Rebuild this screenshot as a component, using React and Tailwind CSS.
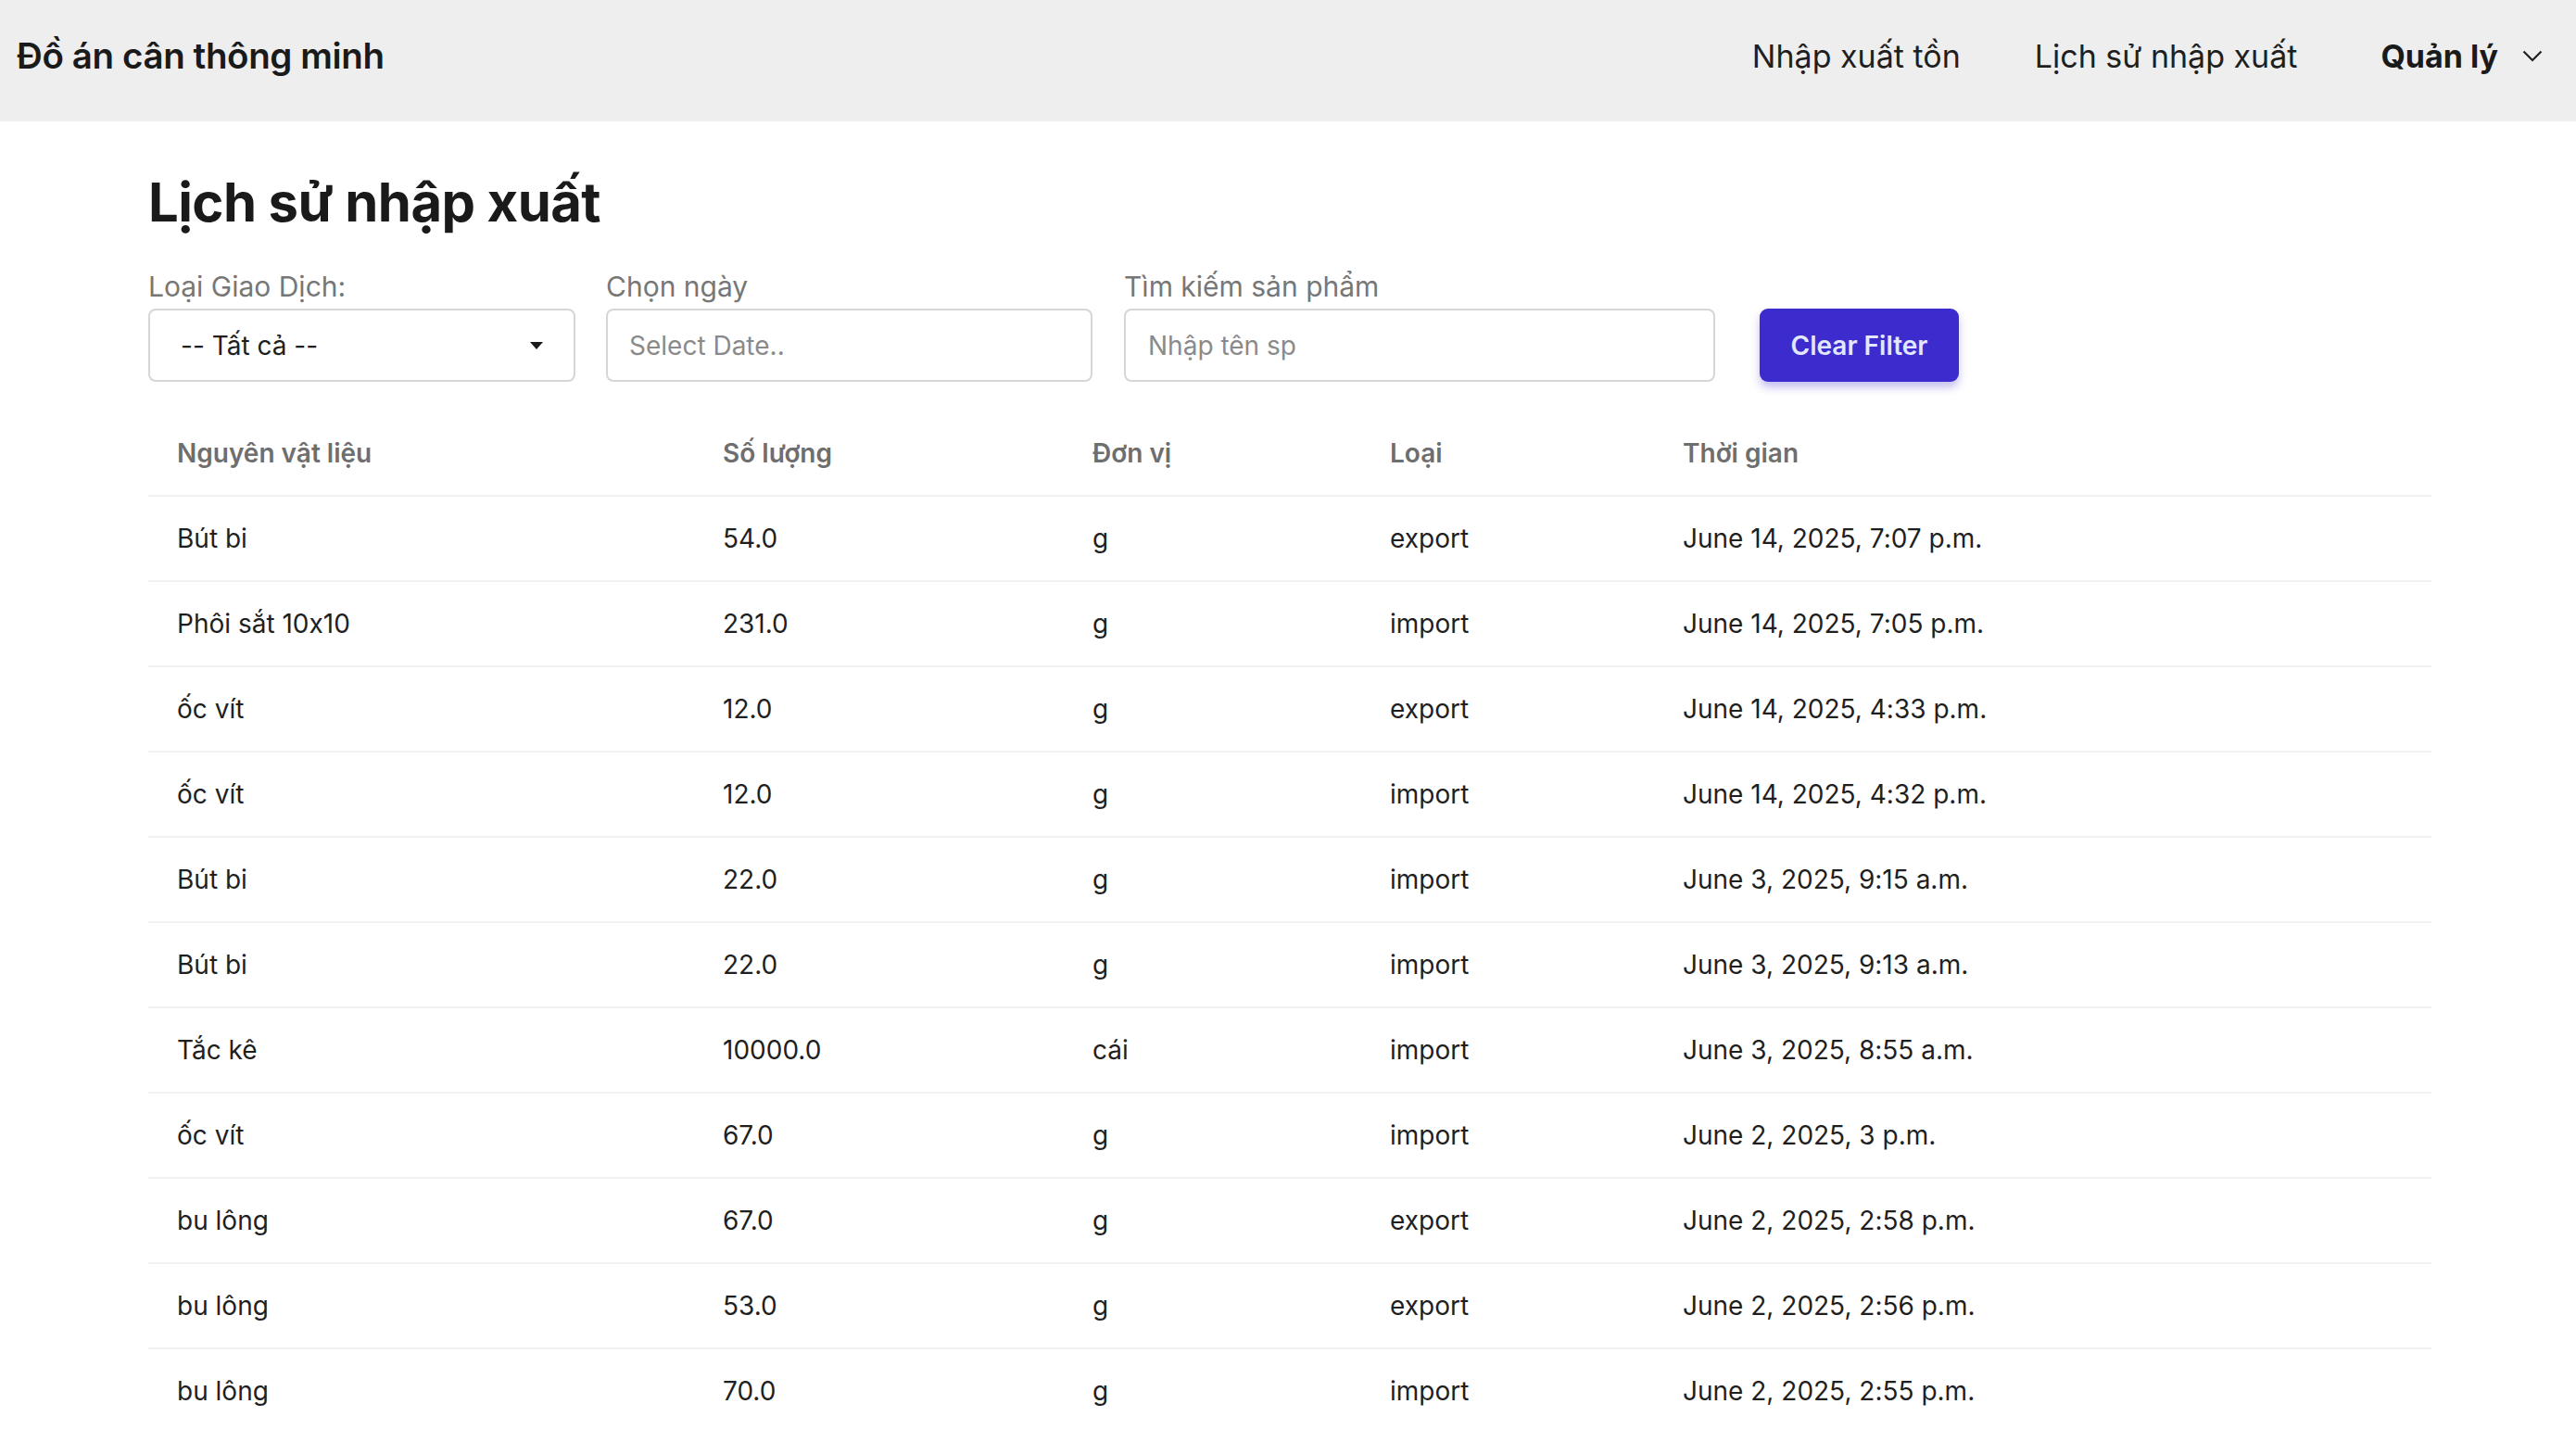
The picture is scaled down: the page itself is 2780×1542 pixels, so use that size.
import React from 'react';

const rows = [
  { name: 'Bút bi', qty: '54.0', unit: 'g', type: 'export', time: 'June 14, 2025, 7:07 p.m.' },
  { name: 'Phôi sắt 10x10', qty: '231.0', unit: 'g', type: 'import', time: 'June 14, 2025, 7:05 p.m.' },
  { name: 'ốc vít', qty: '12.0', unit: 'g', type: 'export', time: 'June 14, 2025, 4:33 p.m.' },
  { name: 'ốc vít', qty: '12.0', unit: 'g', type: 'import', time: 'June 14, 2025, 4:32 p.m.' },
  { name: 'Bút bi', qty: '22.0', unit: 'g', type: 'import', time: 'June 3, 2025, 9:15 a.m.' },
  { name: 'Bút bi', qty: '22.0', unit: 'g', type: 'import', time: 'June 3, 2025, 9:13 a.m.' },
  { name: 'Tắc kê', qty: '10000.0', unit: 'cái', type: 'import', time: 'June 3, 2025, 8:55 a.m.' },
  { name: 'ốc vít', qty: '67.0', unit: 'g', type: 'import', time: 'June 2, 2025, 3 p.m.' },
  { name: 'bu lông', qty: '67.0', unit: 'g', type: 'export', time: 'June 2, 2025, 2:58 p.m.' },
  { name: 'bu lông', qty: '53.0', unit: 'g', type: 'export', time: 'June 2, 2025, 2:56 p.m.' },
  { name: 'bu lông', qty: '70.0', unit: 'g', type: 'import', time: 'June 2, 2025, 2:55 p.m.' },
];

function Navbar() {
  return (
    <nav className="h-[131px] bg-[#eeeeee] flex items-center justify-between pl-[18px] pr-[36px] pb-[10px]">
      <a className="text-[38.5px] font-semibold text-[#1a1a1a] tracking-[-0.01em]">Đồ án cân thông minh</a>
      <div className="flex items-center text-[34px] text-[#1f1f1f]">
        <a className="mr-[80px]">Nhập xuất tồn</a>
        <a className="mr-[90px]">Lịch sử nhập xuất</a>
        <button className="flex items-center font-bold text-[#1a1a1a]">
          Quản lý
          <svg className="ml-[26px]" width="22" height="13" viewBox="0 0 22 13" fill="none">
            <path d="M1.5 1.5 L11 11 L20.5 1.5" stroke="#1f1f1f" strokeWidth="2.2" />
          </svg>
        </button>
      </div>
    </nav>
  );
}

function Filters() {
  return (
    <div className="flex items-end mt-[38px]">
      <div className="flex flex-col w-[461px]">
        <label className="text-[30px] text-[#777777] leading-[36px] mb-[6px]">Loại Giao Dịch:</label>
        <div className="h-[79px] border-2 border-[#d6d6d6] rounded-[8px] flex items-center justify-between pl-[33px] pr-[33px] text-[28px] text-[#1f1f1f]">
          <span>-- Tất cả --</span>
          <svg width="14" height="8" viewBox="0 0 14 8">
            <path d="M0 0 H14 L7 8 Z" fill="#1a1a1a" />
          </svg>
        </div>
      </div>
      <div className="flex flex-col w-[525px] ml-[33px]">
        <label className="text-[30px] text-[#777777] leading-[36px] mb-[6px]">Chọn ngày</label>
        <input
          placeholder="Select Date.."
          className="h-[79px] border-2 border-[#d6d6d6] rounded-[8px] px-[23px] text-[28px] outline-none placeholder:text-[#8a8a8a]"
        />
      </div>
      <div className="flex flex-col w-[638px] ml-[34px]">
        <label className="text-[30px] text-[#777777] leading-[36px] mb-[6px]">Tìm kiếm sản phẩm</label>
        <input
          placeholder="Nhập tên sp"
          className="h-[79px] border-2 border-[#d6d6d6] rounded-[8px] px-[24px] text-[28px] outline-none placeholder:text-[#8a8a8a]"
        />
      </div>
      <button className="ml-[48px] h-[79px] w-[215px] rounded-[9px] bg-[#3d2ccd] text-[#e3e6ff] text-[28px] font-semibold shadow-[0_6px_10px_rgba(61,44,205,0.3)]">
        Clear Filter
      </button>
    </div>
  );
}

function HistoryTable() {
  return (
    <table className="w-full mt-[31px] border-collapse text-[28px]">
      <thead>
        <tr className="border-b-2 border-[#f1f1f1] text-left text-[#6e6e6e]">
          <th className="h-[92px] pl-[31px] w-[589px] font-semibold">Nguyên vật liệu</th>
          <th className="pl-[31px] w-[399px] font-semibold">Số lượng</th>
          <th className="pl-[31px] w-[321px] font-semibold">Đơn vị</th>
          <th className="pl-[31px] w-[316px] font-semibold">Loại</th>
          <th className="pl-[31px] font-semibold">Thời gian</th>
        </tr>
      </thead>
      <tbody className="text-[#1f1f1f]">
        {rows.map((r, i) => (
          <tr key={i} className="border-b-2 border-[#f1f1f1]">
            <td className="h-[92px] pl-[31px]">{r.name}</td>
            <td className="pl-[31px]">{r.qty}</td>
            <td className="pl-[31px]">{r.unit}</td>
            <td className="pl-[31px]">{r.type}</td>
            <td className="pl-[31px]">{r.time}</td>
          </tr>
        ))}
      </tbody>
    </table>
  );
}

export default function App() {
  return (
    <div className="min-h-screen bg-white font-['Inter','Noto_Sans',sans-serif] [font-feature-settings:'calt'_0]">
      <Navbar />
      <main className="pl-[160px] pr-[156px]">
        <h1 className="mt-[52px] text-[58px] leading-[70px] font-bold text-[#1a1a1a] tracking-[-0.01em]">Lịch sử nhập xuất</h1>
        <Filters />
        <HistoryTable />
      </main>
    </div>
  );
}
